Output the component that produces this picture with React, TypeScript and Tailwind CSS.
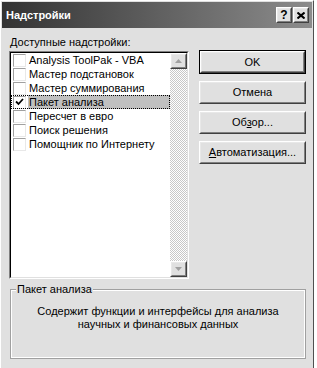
import React from 'react';

const addins = [
  { name: 'Analysis ToolPak - VBA', checked: false },
  { name: 'Мастер подстановок', checked: false },
  { name: 'Мастер суммирования', checked: false },
  { name: 'Пакет анализа', checked: true },
  { name: 'Пересчет в евро', checked: false },
  { name: 'Поиск решения', checked: false },
  { name: 'Помощник по Интернету', checked: false },
];

const font = { fontFamily: '"Liberation Sans", Arial, sans-serif' };

function Raised({ className = '', children }: { className?: string; children?: React.ReactNode }) {
  // classic 3D button edge
  return (
    <div className={`border border-t-white border-l-white border-r-[#404040] border-b-[#404040] ${className}`}>
      <div className="w-full h-full border border-t-[#e8e8e8] border-l-[#e8e8e8] border-r-[#808080] border-b-[#808080] bg-[#e0e0e0] flex items-center justify-center">
        {children}
      </div>
    </div>
  );
}

function Arrow({ up }: { up?: boolean }) {
  return (
    <Raised className="w-[17px] h-[16px]">
      <svg width="7" height="4" viewBox="0 0 7 4">
        {up ? <path d="M3.5 0 L7 4 L0 4 Z" fill="#a0a0a0" /> : <path d="M0 0 L7 0 L3.5 4 Z" fill="#a0a0a0" />}
      </svg>
    </Raised>
  );
}

function Row({ name, checked }: { name: string; checked: boolean }) {
  return (
    <div className={`h-[14px] flex items-center pl-[2px] ${checked ? 'outline outline-1 outline-dotted outline-black -outline-offset-1' : ''}`}>
      <div className="w-[13px] h-[13px] border border-t-[#a0a0a0] border-l-[#a0a0a0] border-r-[#e8e8e8] border-b-[#e8e8e8] bg-white flex items-center justify-center">
        {checked && (
          <svg width="9" height="8" viewBox="0 0 9 8">
            <path d="M1 3.5 L3.5 6 L8 1" stroke="black" strokeWidth="1.8" fill="none" />
          </svg>
        )}
      </div>
      <span className={`ml-[2px] px-[1px] leading-[14px] h-[14px] ${checked ? 'bg-[#c0c0c0] flex-1' : ''}`}>{name}</span>
    </div>
  );
}

function Btn({ children, def }: { children: React.ReactNode; def?: boolean }) {
  if (def) {
    return (
      <div className="w-[107px] h-[24px] border border-black">
        <Raised className="w-full h-full">{children}</Raised>
      </div>
    );
  }
  return <Raised className="w-[107px] h-[23px]">{children}</Raised>;
}

export default function App() {
  return (
    <div className="w-[317px] h-[368px] flex bg-white text-[11px] text-black" style={font}>
      <div className="w-[314px] h-full flex flex-col border-l border-t border-l-white border-t-white border-r border-r-[#505050] bg-[#e0e0e0]">
        <div className="mx-[1px] mt-[1px] h-[26px] flex items-center justify-between pl-[4px] pr-[3px] bg-[linear-gradient(to_right,#333333,#8c8c8c)]">
          <span className="text-white font-bold text-[11px]">Надстройки</span>
          <div className="flex gap-[1px]">
            <Raised className="w-[16px] h-[16px]">
              <span className="font-bold text-[12px] leading-none">?</span>
            </Raised>
            <Raised className="w-[16px] h-[16px]">
              <svg width="8" height="7" viewBox="0 0 8 7">
                <path d="M0.5 0.5 L7.5 6.5 M7.5 0.5 L0.5 6.5" stroke="black" strokeWidth="2" />
              </svg>
            </Raised>
          </div>
        </div>

        <div className="flex pl-[8px] pt-[6px]">
          <div className="flex flex-col">
            <div className="h-[17px] leading-[17px] pl-[1px]">
              <span className="underline">Д</span>оступные надстройки:
            </div>
            <div className="w-[180px] h-[228px] border border-t-[#808080] border-l-[#808080] border-r-white border-b-white">
              <div className="w-full h-full flex border border-t-black border-l-black border-r-[#e0e0e0] border-b-[#e0e0e0] bg-white">
                <div className="flex-1 flex flex-col">
                  {addins.map((a) => (
                    <Row key={a.name} name={a.name} checked={a.checked} />
                  ))}
                </div>
                <div className="w-[17px] flex flex-col bg-[repeating-conic-gradient(#c8c8c8_0_25%,#ffffff_0_50%)] bg-[length:2px_2px]">
                  <Arrow up />
                  <div className="flex-1" />
                  <Arrow />
                </div>
              </div>
            </div>
          </div>

          <div className="flex flex-col gap-[7px] ml-[10px] pt-[16px]">
            <Btn def>OK</Btn>
            <Btn>Отмена</Btn>
            <Btn>
              <span>Об<span className="underline">з</span>ор...</span>
            </Btn>
            <Btn>
              <span><span className="underline">А</span>втоматизация...</span>
            </Btn>
          </div>
        </div>

        <div className="mt-[10px] ml-[9px] w-[296px] h-[70px] border border-[#a0a0a0] relative">
          <div className="w-full h-full border border-white flex flex-col items-center pt-[14px] leading-[13px] text-center">
            <div>Содержит функции и интерфейсы для анализа</div>
            <div>научных и финансовых данных</div>
          </div>
          <span className="absolute left-[5px] -top-[8px] px-[1px] bg-[#e0e0e0] leading-[14px]">Пакет анализа</span>
        </div>
      </div>
      <div className="w-[3px] h-full bg-white" />
    </div>
  );
}
